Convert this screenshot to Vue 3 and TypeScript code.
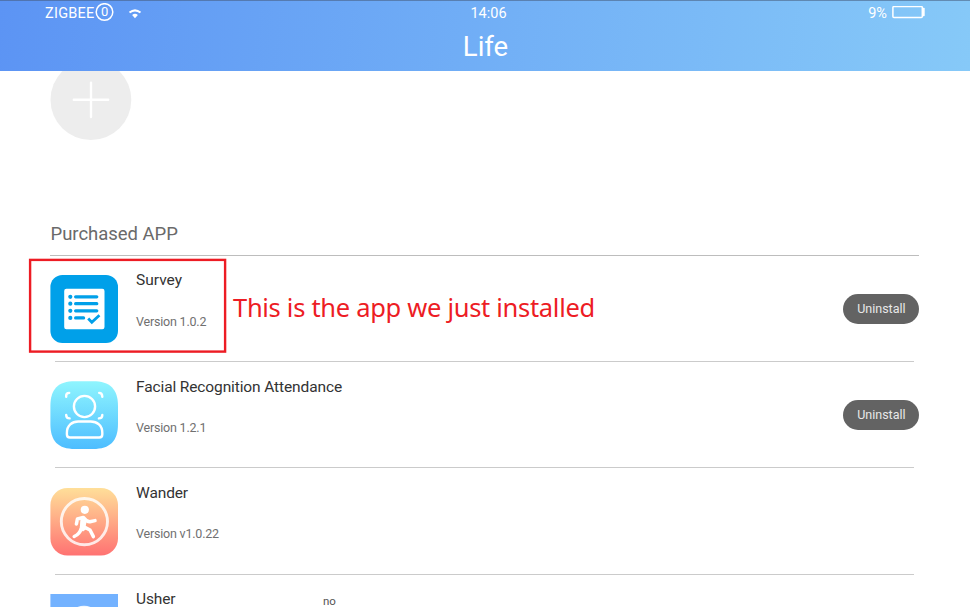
<script setup lang="ts">
interface AppItem {
  id: 'survey' | 'face' | 'wander' | 'usher'
  name: string
  version: string
  removable: boolean
}

const apps: AppItem[] = [
  { id: 'survey', name: 'Survey', version: 'Version 1.0.2', removable: true },
  { id: 'face', name: 'Facial Recognition Attendance', version: 'Version 1.2.1', removable: true },
  { id: 'wander', name: 'Wander', version: 'Version v1.0.22', removable: false },
  { id: 'usher', name: 'Usher', version: '', removable: false },
]
</script>

<template>
  <div class="screen">
    <header class="header">
      <div class="status">
        <div class="status-left">
          <span class="zigbee">ZIGBEE</span>
          <span class="count">
            <svg class="ring" width="19" height="19" viewBox="0 0 19 19">
              <circle cx="9.5" cy="9" r="8.3" fill="none" stroke="#fff" stroke-width="1.5" />
            </svg>
            <span class="digit">0</span>
          </span>
          <svg class="wifi" width="14" height="10" viewBox="0 0 14 10">
            <path d="M1.5 3.6Q7-.9 12.5 3.6" fill="none" stroke="#fff" stroke-width="2" />
            <path d="M4.1 6.1Q7 3.6 9.9 6.1L7 9.2Z" fill="#fff" />
          </svg>
        </div>
        <span class="clock">14:06</span>
        <div class="status-right">
          <span class="percent">9%</span>
          <svg width="33" height="13" viewBox="0 0 33 13">
            <rect x=".9" y=".6" width="29.4" height="10.8" rx="1" fill="none" stroke="#fff" stroke-width="1.5" />
            <rect x="30" y="1.7" width="2.7" height="8.6" rx=".8" fill="#fff" />
          </svg>
        </div>
      </div>
      <h1 class="title">Life</h1>
    </header>

    <main class="content">
      <button class="add" aria-label="Add">
        <svg width="82" height="82" viewBox="0 0 82 82">
          <circle cx="40.9" cy="40.7" r="40.4" fill="#ededed" />
          <path d="M23.8 40.7H58.2M41 23.6V58" stroke="#fff" stroke-width="2.4" stroke-linecap="round" />
        </svg>
      </button>

      <h2 class="heading"><span class="heading-text">Purchased APP</span></h2>

      <div v-for="app in apps" :key="app.id" class="row">
        <svg v-if="app.id === 'survey'" class="icon" viewBox="0 0 68 68">
          <rect x=".4" width="67.6" height="68" rx="12" fill="#00a0e9" />
          <rect x="14.2" y="13.7" width="40.3" height="40.6" rx="2.2" fill="#fff" />
          <g fill="none" stroke="#00a0e9" stroke-width="3.2" stroke-linecap="round">
            <path d="M25.6 21.8H46.8M25.6 28.7H46.8M25.6 35.8H46.8M25.6 42.9H33.6" />
            <path d="M38.2 43.6L41.8 47.2L49.4 40.2" stroke-width="2.8" stroke-linecap="butt" />
          </g>
          <g fill="#00a0e9">
            <circle cx="20.3" cy="21.8" r="2.1" />
            <circle cx="20.3" cy="28.7" r="2.1" />
            <circle cx="20.3" cy="35.8" r="2.1" />
            <circle cx="20.3" cy="42.9" r="2.1" />
          </g>
        </svg>

        <svg v-else-if="app.id === 'face'" class="icon" viewBox="0 0 68 68">
          <defs>
            <linearGradient id="face-bg" x1="0" y1="0" x2="0" y2="1">
              <stop offset="0" stop-color="#8ff5fe" />
              <stop offset="1" stop-color="#4dbdff" />
            </linearGradient>
          </defs>
          <path d="M25 .2H43C60 .2 68 8 68 25V43C68 60 60 68 43 68H25C8 68 .4 60 .4 43V25C.4 8 8 .2 25 .2Z" fill="url(#face-bg)" />
          <g fill="none" stroke="#fff" stroke-width="2.4" stroke-linecap="round">
            <circle cx="34.5" cy="25.5" r="10.6" />
            <path d="M16.9 53.5V51.7C16.9 44.7 22.1 40.5 28.1 40.5H40.8C47.1 40.5 52.3 44.7 52.3 51.7V53.5Q52.3 56.5 49.3 56.5H19.9Q16.9 56.5 16.9 53.5Z" />
            <path d="M16.2 15.8V14.6Q16.2 12 19.2 11.9M49.2 11.9Q52.3 12 52.3 15.8M16.2 34Q16.2 37.4 19.6 37.4M52.3 34Q52.3 37.4 48.9 37.4" />
          </g>
        </svg>

        <svg v-else-if="app.id === 'wander'" class="icon" viewBox="0 0 68 68">
          <defs>
            <linearGradient id="wander-bg" x1="0" y1="0" x2="0" y2="1">
              <stop offset="0" stop-color="#ffdf99" />
              <stop offset="1" stop-color="#ff7272" />
            </linearGradient>
          </defs>
          <rect x=".4" width="67.6" height="67.6" rx="17" fill="url(#wander-bg)" />
          <circle cx="34.4" cy="33.6" r="23.1" fill="none" stroke="#fff" stroke-opacity=".82" stroke-width="2.9" />
          <circle cx="34.8" cy="21.8" r="4.1" fill="#fff" />
          <g fill="none" stroke="#fff" stroke-width="3.5" stroke-linecap="round" stroke-linejoin="round">
            <path d="M26.4 36L27.4 31L33.3 29.4Q36.5 33.7 39.8 33.8L45 32.6" />
            <path d="M33 31.1L31.3 40.1Q30 45.8 24.2 48.5M33 38.4L40 42L43.4 48.6" />
          </g>
          <path d="M30.5 29.1L37 31.9L35.5 38.8L37 40.6L33 43.6L30 41.6Z" fill="#fff" />
        </svg>

        <svg v-else class="icon" viewBox="0 0 68 68">
          <rect x=".4" width="67.6" height="68" fill="#73b2ff" />
          <circle cx="34" cy="28.7" r="17" fill="#fff" fill-opacity=".9" />
        </svg>

        <div class="info">
          <span :class="['name', app.id]">{{ app.name }}</span>
          <span :class="['version', app.id]">{{ app.version }}</span>
        </div>
        <button v-if="app.removable" class="uninstall">Uninstall</button>
      </div>
    </main>

    <span class="toast">no</span>
    <svg class="mark" width="200" height="97" viewBox="0 0 200 97">
      <rect x="2.1" y="1.9" width="195" height="91.7" fill="none" stroke="#ed1c24" stroke-width="2.4" />
    </svg>
    <span class="note">This is the app we just installed</span>
  </div>
</template>

<style>
body {
  margin: 0;
  overflow: hidden;
}
</style>

<style scoped>
.screen {
  position: relative;
  width: 970px;
  height: 607px;
  overflow: hidden;
  background: #fff;
  font-family: Roboto, 'Liberation Sans', sans-serif;
}
.header {
  position: relative;
  box-sizing: border-box;
  height: 71px;
  color: #fff;
  background: linear-gradient(97deg, #5c94f4, #86c9f8);
  border-top: 1px solid rgba(70, 90, 120, 0.55);
}
.status {
  display: grid;
  grid-template-columns: 1fr auto 1fr;
  align-items: center;
  height: 24px;
  padding: 0 45px;
  font-size: 14.5px;
}
.status-left,
.status-right {
  display: flex;
  align-items: center;
}
.status-left {
  margin-top: -2px;
}
.zigbee {
  margin-top: 3px;
  letter-spacing: 0.25px;
}
.status-right {
  justify-content: flex-end;
  gap: 5px;
  margin-top: -2px;
}
.percent {
  margin-top: 2px;
  font-size: 14.5px;
}
.clock {
  padding-left: 7px;
}
.count {
  display: grid;
  place-items: center;
  width: 19px;
  height: 19px;
  margin-left: 0.5px;
}
.ring,
.digit {
  grid-area: 1 / 1;
}
.digit {
  font-size: 13px;
  line-height: 18px;
}
.wifi {
  margin: 4px 0 0 14px;
}
.title {
  margin: 0;
  padding-left: 1px;
  font-size: 27.5px;
  font-weight: 400;
  line-height: 43px;
  text-align: center;
}
.content {
  padding: 0 50.6px 0 50px;
}
.add {
  display: block;
  width: 82px;
  height: 81px;
  margin-top: -12px;
  padding: 0;
  border: 0;
  background: none;
}
.add svg {
  display: block;
}
.heading {
  box-sizing: border-box;
  height: 116px;
  margin: 0;
  padding: 82px 0 0 0.5px;
  border-bottom: 1px solid #bdbdbd;
  color: #6a6a6a;
  font-size: 18.5px;
  font-weight: 400;
  letter-spacing: -0.03px;
  line-height: 24px;
}
.row {
  position: relative;
  display: flex;
  align-items: flex-start;
  box-sizing: border-box;
  height: 106.2px;
  padding-top: 19.2px;
}
.row::after {
  content: '';
  position: absolute;
  right: 5px;
  bottom: 0;
  left: 5px;
  height: 1px;
  background: #cbcbcb;
}
.icon {
  flex: none;
  width: 68px;
  height: 68px;
}
.info {
  display: flex;
  flex: 1;
  flex-direction: column;
  align-items: flex-start;
  gap: 23.6px;
  margin: -4.8px 0 0 18px;
}
.name {
  color: #333;
  font-size: 15.5px;
  letter-spacing: -0.12px;
  line-height: 20px;
}
.name.survey {
  letter-spacing: 0;
}
.version {
  color: #707070;
  font-size: 12.5px;
  letter-spacing: -0.2px;
  line-height: 16px;
}
.uninstall {
  width: 76px;
  height: 30.6px;
  margin-top: 18.5px;
  padding: 0;
  border: 0;
  border-radius: 16px;
  color: #e8e8e8;
  background: #636363;
  font: 12.5px/30px Roboto, 'Liberation Sans', sans-serif;
}
.toast {
  position: absolute;
  top: 595px;
  left: 323px;
  color: #555;
  font-size: 11.5px;
  line-height: 12px;
}
.mark {
  position: absolute;
  top: 258px;
  left: 28px;
}
.note {
  position: absolute;
  top: 289px;
  left: 233px;
  color: #ed1c24;
  font-family: 'Noto Sans', 'Open Sans', sans-serif;
  font-size: 25.5px;
  letter-spacing: -0.3px;
  line-height: 36px;
  white-space: nowrap;
}
</style>
